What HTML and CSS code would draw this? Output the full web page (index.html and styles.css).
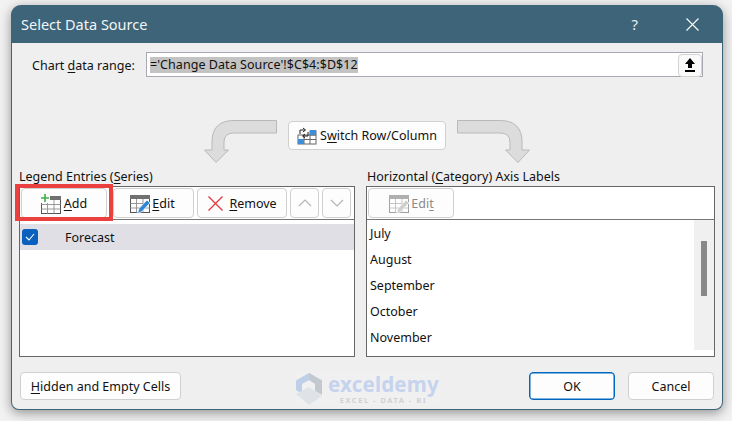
FILE: index.html
```html
<!DOCTYPE html>
<html lang="en">
<head>
<meta charset="utf-8">
<title>Select Data Source</title>
<link rel="stylesheet" href="styles.css">
</head>
<body>
<svg class="defs" width="0" height="0" aria-hidden="true">
  <defs>
    <g id="grid">
      <rect x="1.500" y="2.500" width="19" height="17" fill="#fff" stroke="#555"/>
      <rect x="1" y="2" width="20" height="4" fill="#707070"/>
      <path d="M1.500 10.500H20.500M1.500 15H20.500M7.500 6V19.500M14 6V19.500" stroke="#999" fill="none"/>
    </g>
  </defs>
</svg>
<main class="dialog">
  <header class="titlebar">
    <h1 class="title">Select Data Source</h1>
    <span class="help">?</span>
    <svg class="close" width="13" height="13" viewBox="0 0 13 13"><path d="M.5.500 12.500 12.500M12.500.500.500 12.500" stroke="#fff" stroke-width="1.100" fill="none"/></svg>
  </header>

  <div class="range-row">
    <label class="range-label">Chart <u>d</u>ata range:</label>
    <div class="range-input">
      <span class="selected">='Change Data Source'!$C$4:$D$12</span>
      <button class="collapse">
        <svg width="12" height="16" viewBox="0 0 12 16"><path d="M6 1 11 7H8V11H4V7H1Z" fill="#000"/><rect x="1" y="13" width="10" height="2" fill="#000"/></svg>
      </button>
    </div>
  </div>

  <div class="switch-row">
    <svg class="arrow" width="74" height="44" viewBox="0 0 74 44"><path d="M72.500.500H30Q8 .5 8 22V30H.5L12 42.500 24.500 30H20V22Q20 13 30 13H72.500Z" fill="#dcdcdc" stroke="#b9b9b9"/></svg>
    <button class="btn switch">
      <svg width="20" height="18" viewBox="0 0 20 18"><rect x="1" y="8" width="18" height="9" fill="#fff" stroke="#666"/><path d="M7 8V17M13 8V17M1 12.500H19M13 3.500H19V8H13Z" stroke="#666" fill="none"/><rect x="1" y="12" width="6" height="5" fill="#3f8fd8"/><rect x="13" y="3" width="6" height="5" fill="#3f8fd8"/><path d="M3 7V3H8M6 1 8.500 3 6 5M11 5V9H6M8 7 5.500 9 8 11" stroke="#222" fill="none"/></svg>
      <span>S<u>w</u>itch Row/Column</span>
    </button>
    <svg class="arrow mirrored" width="74" height="44" viewBox="0 0 74 44"><path d="M72.500.500H30Q8 .5 8 22V30H.5L12 42.500 24.500 30H20V22Q20 13 30 13H72.500Z" fill="#dcdcdc" stroke="#b9b9b9"/></svg>
  </div>

  <div class="panels">
    <section class="panel">
      <h2 class="panel-title">Legend Entries (<u>S</u>eries)</h2>
      <div class="box">
        <div class="toolbar">
          <button class="btn tool add">
            <svg width="21" height="20" viewBox="0 0 21 20"><use href="#grid"/><rect x="0" y="0" width="10" height="9" fill="#fdfdfd"/><path d="M5 0V8M1 4H9" stroke="#3fae49" stroke-width="1.600"/></svg>
            <span><u>A</u>dd</span>
          </button>
          <button class="btn tool edit">
            <svg width="21" height="21" viewBox="0 0 21 21"><use href="#grid"/><path d="M8.500 20.500 10 15.500 18 7 21 10 13 18.500Z" fill="#2f86d3" stroke="#fff" stroke-width=".7"/></svg>
            <span><u>E</u>dit</span>
          </button>
          <button class="btn tool remove">
            <svg width="15" height="15" viewBox="0 0 15 15"><path d="M.5.500 14.500 14.500M14.500.500.500 14.500" stroke="#e5383b" stroke-width="1.300" fill="none"/></svg>
            <span><u>R</u>emove</span>
          </button>
          <button class="btn tool step">
            <svg width="14" height="8" viewBox="0 0 14 8"><path d="M1 7 7 1 13 7" stroke="#b5b5b5" stroke-width="1.200" fill="none"/></svg>
          </button>
          <button class="btn tool step">
            <svg width="14" height="8" viewBox="0 0 14 8"><path d="M1 1 7 7 13 1" stroke="#b5b5b5" stroke-width="1.200" fill="none"/></svg>
          </button>
        </div>
        <div class="series-list">
          <div class="series-row">
            <span class="check">
              <svg width="10" height="8" viewBox="0 0 10 8"><path d="M1 4 4 7 9 1" stroke="#fff" stroke-width="1.100" fill="none"/></svg>
            </span>
            <span class="series-name">Forecast</span>
          </div>
        </div>
      </div>
      <span class="highlight"></span>
    </section>

    <section class="panel">
      <h2 class="panel-title offset">Horizontal (<u>C</u>ategory) Axis Labels</h2>
      <div class="box">
        <div class="toolbar">
          <button class="btn tool edit-off">
            <svg width="21" height="21" viewBox="0 0 21 21" class="faded"><use href="#grid"/><path d="M8.500 20.500 10 15.500 18 7 21 10 13 18.500Z" fill="#aaa" stroke="#fff" stroke-width=".7"/></svg>
            <span>Edi<u>t</u></span>
          </button>
        </div>
        <div class="labels">
          <ul class="label-list">
            <li>July</li>
            <li>August</li>
            <li>September</li>
            <li>October</li>
            <li>November</li>
          </ul>
          <div class="scrollbar"><span class="thumb"></span></div>
        </div>
      </div>
    </section>
  </div>

  <footer class="footer">
    <button class="btn hidden-cells"><span><u>H</u>idden and Empty Cells</span></button>
    <div class="actions">
      <button class="btn primary">OK</button>
      <button class="btn cancel">Cancel</button>
    </div>
    <div class="watermark">
      <svg width="28" height="32" viewBox="0 0 28 32"><path d="M14 0 27 7.500V14L14 7 7 11V21L1 17V7.500Z" fill="#bfcfe8"/><path d="M14 0 27 7.500V22L20 18V11L14 7Z" fill="#c4c9cf"/><path d="M1 21 14 14 27 23 14 32Z" fill="#dfe3e8"/></svg>
      <div class="wm-text">
        <span class="wm-name">exceldemy</span>
        <span class="wm-sub">EXCEL - DATA - BI</span>
      </div>
    </div>
  </footer>
</main>
</body>
</html>
```

FILE: styles.css
```css
* { box-sizing: border-box; }

html, body { margin: 0; height: 100%; }

body {
  background: #f2f2f2;
  padding: 5px 9px 11px 11px;
  overflow: hidden;
  font: 12.500px/18px "Noto Sans", sans-serif;
  color: #111;
}

.defs { position: absolute; }

u { text-underline-offset: 2px; text-decoration-thickness: 1px; }

button { font: inherit; color: inherit; }

.dialog {
  position: relative;
  width: 712px;
  height: 405px;
  background: #efefef;
  border: 1px solid #3d6478;
  border-top: 0;
  border-radius: 10px 10px 8px 8px;
  box-shadow: 0 3px 12px rgba(0, 0, 0, .4);
  display: flex;
  flex-direction: column;
}

.titlebar {
  height: 38px;
  flex: none;
  margin: 0 -1px;
  padding: 0 24px 0 10px;
  background: #3d6478;
  border-radius: 10px 10px 0 0;
  display: flex;
  align-items: center;
  color: #fff;
}

.title { margin: 0; font-size: 14.500px; font-weight: 400; flex: 1; color: #f2f5f7; }
.help { font-size: 15px; margin-right: 48px; color: #e8edf0; }

.range-row {
  display: flex;
  align-items: center;
  height: 25px;
  margin-top: 9px;
  padding: 0 19px 0 20px;
}

.range-label { width: 114px; flex: none; padding-top: 3px; }

.range-input {
  flex: 1;
  height: 25px;
  background: #fff;
  border: 1px solid #a9a9b1;
  padding-left: 3px;
  display: flex;
  align-items: center;
  justify-content: space-between;
}

.selected { background: #c3c3c3; line-height: 16px; letter-spacing: .06px; }

.collapse {
  width: 24px;
  height: 23px;
  margin-top: 1px;
  padding: 0;
  background: #fafafa;
  border: 1px solid #d3d3d3;
  border-radius: 4px;
  display: flex;
  align-items: center;
  justify-content: center;
}

.btn {
  background: #fdfdfd;
  border: 1px solid #d0d0d0;
  border-radius: 4px;
  padding: 0;
  display: flex;
  align-items: center;
  justify-content: center;
  gap: 3px;
}

.switch-row {
  display: flex;
  align-items: flex-start;
  height: 44px;
  margin-top: 43px;
  gap: 10px;
  padding-left: 192px;
}

.arrow { display: block; }
.mirrored { transform: scaleX(-1); }

.switch { width: 158px; height: 29px; margin-top: 1px; }

.panels {
  display: grid;
  grid-template-columns: 336px 349px;
  column-gap: 11px;
  padding-left: 7px;
  margin-top: 3px;
}

.panel { position: relative; }

.panel-title {
  margin: 0;
  height: 19px;
  padding-top: 1px;
  font-size: inherit;
  font-weight: 400;
  line-height: 18px;
}

.offset { padding-left: 1px; }

.box {
  height: 171px;
  background: #fff;
  border: 1px solid #666;
}

.toolbar {
  display: flex;
  gap: 3px;
  height: 33px;
  padding: 1px 0 0 1px;
  border-bottom: 1px solid #777;
}

.tool { height: 30px; padding-top: 1px; }

.add { width: 86px; margin-right: 3px; gap: 3px; padding-right: 1px; }
.edit { width: 81px; gap: 2px; padding-right: 3px; }
.remove { width: 90px; gap: 6px; padding-left: 1px; }
.step { width: 29px; padding-top: 0; }

.edit-off { width: 86px; color: #8a8a8a; gap: 2px; }
.faded { opacity: .55; }

.series-list { padding-top: 4px; }

.series-row {
  height: 26px;
  background: #dfdfe5;
  display: flex;
  align-items: center;
  gap: 27px;
  padding-left: 2px;
}

.series-name { padding-top: 2px; }

.check {
  width: 16px;
  height: 16px;
  border-radius: 3px;
  background: #0a60bd;
  display: flex;
  align-items: center;
  justify-content: center;
}

.highlight {
  position: absolute;
  left: -4px;
  top: 17px;
  width: 98px;
  height: 37px;
  border: 4px solid #ea4040;
  pointer-events: none;
}

.labels {
  display: flex;
  height: 131px;
  justify-content: space-between;
}

.label-list {
  list-style: none;
  margin: 0;
  padding: 0 0 0 3px;
}

.label-list li { height: 26px; line-height: 28px; }

.scrollbar {
  width: 20px;
  height: 130px;
  background: #f0f0f0;
  padding: 21px 7px 0;
}

.thumb { display: block; width: 6px; height: 55px; background: #888; }

.footer {
  position: relative;
  display: flex;
  justify-content: space-between;
  padding: 0 8px;
  margin-top: 15px;
}

.hidden-cells, .primary, .cancel { padding-top: 1px; }

.hidden-cells { width: 161px; height: 28px; }

.actions { display: flex; gap: 13px; }

.primary, .cancel { width: 86px; height: 28px; }

.primary { border-color: #0067c0; box-shadow: inset 0 0 0 .5px #0067c0; }

.watermark {
  position: absolute;
  left: 283px;
  top: 1px;
  display: flex;
  gap: 5px;
  align-items: center;
  background: #f0f0f0;
}

.wm-text { display: flex; flex-direction: column; align-items: center; gap: 2px; }

.wm-name {
  font: 700 20.500px/20px "Noto Sans", sans-serif;
  color: #c6d3ee;
  letter-spacing: .2px;
}

.wm-sub {
  font: 700 7.500px/9px "Noto Sans", sans-serif;
  color: #cfd2d6;
  letter-spacing: 1.500px;
}
```
